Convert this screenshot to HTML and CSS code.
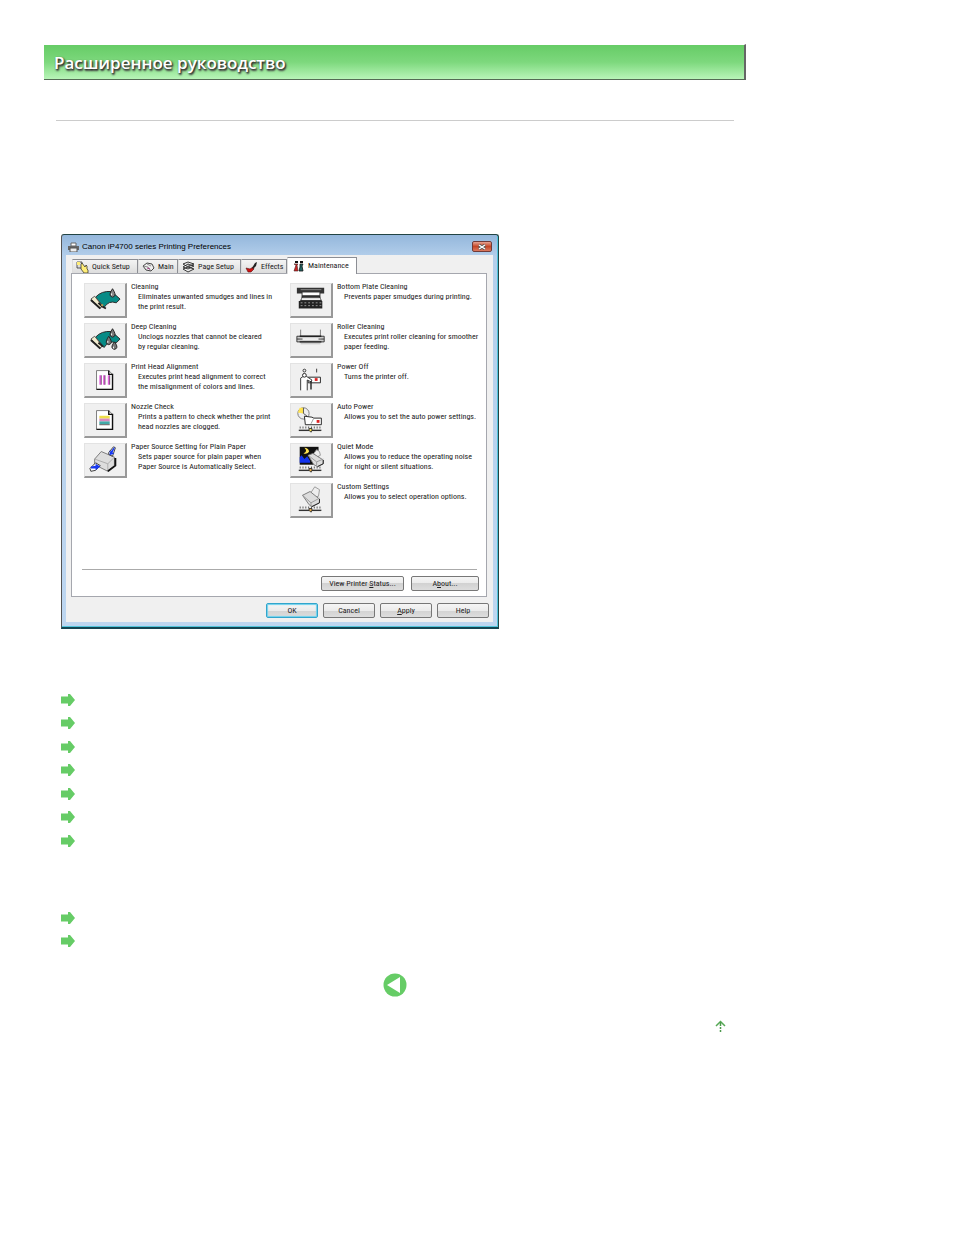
FILE: index.html
```
<!DOCTYPE html>
<html lang="ru">
<head>
    <meta charset="UTF-8">
    <meta name="viewport" content="width=device-width, initial-scale=1.0">
    <title>Расширенное руководство</title>
    <link rel="stylesheet" href="styles.css">
</head>
<body>
    <div class="page">
        <header class="header">
            <h1>Расширенное руководство</h1>
        </header>

        <main class="content">
            <section class="window">
                <div class="titlebar">
                    <svg class="printer" viewBox="0 0 11 10"><path d="M3 1h5v3H3z" fill="#fff" stroke="#666"/><path d="M0 4h11v4H0z" fill="#666"/><path d="M2 6h7v4H2z" fill="#eee" stroke="#555"/></svg>
                    <h2>Canon iP4700 series Printing Preferences</h2>
                    <button class="close" aria-label="Close"><svg viewBox="0 0 8 6"><path d="M1 1l6 4M7 1L1 5" stroke="#555" stroke-width="3"/><path d="M1 1l6 4M7 1L1 5" stroke="#fff" stroke-width="1.5"/></svg></button>
                </div>

                <div class="client">
                    <div class="tabs">
                        <button class="tab quick"><svg viewBox="0 0 13 12"><path d="M1 1h5v6H1z" fill="#ddd" stroke="#333" stroke-width=".8"/><path d="M1 1h3v3H1z" fill="#ffed77"/><path d="M5 3l1-1 3 4 1-2 1 1v3l1 1v3H8L5 8z" fill="#ffed77" stroke="#222" stroke-width=".7"/></svg>Quick Setup</button>
                        <button class="tab main"><svg viewBox="0 0 13 12"><path d="M1 5l4-3 5 1 2 4-3 3-5-1z" fill="#eee" stroke="#333" stroke-width=".9"/><path d="M1 5l5 1 3 4M5 3l4 2" fill="none" stroke="#777" stroke-width=".8"/><path d="M5 7l3 1" stroke="#927" stroke-width=".8"/></svg>Main</button>
                        <button class="tab setup"><svg viewBox="0 0 13 12"><path d="M1 8l5-2 6 2-6 3zM1 6l5-3 6 2-6 3zM1 3l5-2 6 2-6 3z" fill="#eee" stroke="#222" stroke-width=".9"/><path d="M5 4l3-1v2z" fill="#555"/></svg>Page Setup</button>
                        <button class="tab effects"><svg viewBox="0 0 13 12"><path d="M1 7l4 1 3-2 1 2-3 3H3z" fill="#d21212" stroke="#511" stroke-width=".6"/><path d="M7 7l3-5 2-1-1 4-3 3z" fill="#222"/></svg>Effects</button>
                        <button class="tab active"><svg viewBox="0 0 13 12"><path d="M2 4l2 1-2 6h4L5 5l1-1z" fill="#c22" stroke="#422" stroke-width=".6"/><path d="M8 4h3l-1 2 1 5H7l1-4z" fill="#266" stroke="#111" stroke-width=".8"/><path d="M3 2h3M8 2h3" stroke="#111" stroke-width="2"/></svg>Maintenance</button>
                    </div>

                    <div class="panel">
                        <div class="columns">
                            <div class="column">
                                <div class="item">
                                    <button class="tool" aria-labelledby="cleaning"><svg viewBox="0 0 42 34"><path d="M11 14q6-7 17-6l9 8-4 4q-8-3-13 5z" fill="#078b86" stroke="#222"/><path d="M6 16l4-3 8 10-2 3z" fill="#f2edcf" stroke="#555"/><path d="M6 17l10 9M14 20l4 4 4 2" stroke="#222" stroke-width="2" fill="none"/><path d="M17 22l2 1" stroke="#b99a55" stroke-width="2"/><path d="M29 5q-4 6-2 8 2 2 4 0 2-2-2-8z" fill="#888" stroke="#222"/><path d="M28 10v2" stroke="#fff"/></svg></button>
                                    <div class="text"><h3 id="cleaning">Cleaning</h3><p>Eliminates unwanted smudges and lines in<br>the print result.</p></div>
                                </div>
                                <div class="item">
                                    <button class="tool" aria-labelledby="deep"><svg viewBox="0 0 42 34"><path d="M11 14q6-7 17-6l9 8-4 4q-8-3-13 5z" fill="#078b86" stroke="#222"/><path d="M6 16l4-3 8 10-2 3z" fill="#f2edcf" stroke="#555"/><path d="M6 17l10 9M14 20l5 4" stroke="#222" stroke-width="2"/><path d="M29 5q-4 6-2 8 2 2 4 0 2-2-2-8zM25 13q-4 6-2 8 2 2 4 0 2-2-2-8zM31 19q-4 5-2 7 2 2 4 0 2-2-2-7z" fill="#777" stroke="#222"/><path d="M28 10v2M24 18v2M30 24v2" stroke="#fff"/></svg></button>
                                    <div class="text"><h3 id="deep">Deep Cleaning</h3><p>Unclogs nozzles that cannot be cleared<br>by regular cleaning.</p></div>
                                </div>
                                <div class="item">
                                    <button class="tool" aria-labelledby="alignment"><svg viewBox="0 0 42 34"><path d="M12 7h13l4 4v16H12z" fill="#fff" stroke="#777"/><path d="M25 7v4h4v16H12" fill="none" stroke="#111" stroke-width="1.5"/><path d="M16 12v10M20 12v10M25 12v10" stroke="#e465df" stroke-width="2"/><path d="M17 12v10M21 12v10M26 12v10" stroke="#523452" stroke-width=".8"/></svg></button>
                                    <div class="text"><h3 id="alignment">Print Head Alignment</h3><p>Executes print head alignment to correct<br>the misalignment of colors and lines.</p></div>
                                </div>
                                <div class="item">
                                    <button class="tool" aria-labelledby="nozzle"><svg viewBox="0 0 42 34"><path d="M12 7h13l4 4v16H12z" fill="#fff" stroke="#777"/><path d="M25 7v4h4v16H12" fill="none" stroke="#111" stroke-width="1.5"/><path d="M15 14h11" stroke="#eedf4b" stroke-width="3"/><path d="M15 17h11" stroke="#d98abf" stroke-width="3"/><path d="M15 20h11" stroke="#42aaa9" stroke-width="3"/><path d="M15 22h11" stroke="#555"/></svg></button>
                                    <div class="text"><h3 id="nozzle">Nozzle Check</h3><p>Prints a pattern to check whether the print<br>head nozzles are clogged.</p></div>
                                </div>
                                <div class="item">
                                    <button class="tool" aria-labelledby="source"><svg viewBox="0 0 42 34"><path d="M10 16l7-8 14 6v9l-7 6-14-7z" fill="#ddd" stroke="#777"/><path d="M10 16l14 5 7-7M24 21v8" fill="none" stroke="#aaa"/><path d="M24 29l8-6v-8" fill="none" stroke="#111" stroke-width="2"/><path d="M25 9l5-6 2 1-3 9-4-2z" fill="#fff" stroke="#333"/><path d="M31 3l-4 5-1-1v5l5-2-2-1 2-4z" fill="#1738f0"/><path d="M5 26l6-6 5 3-5 5-5 1z" fill="#fff" stroke="#333"/><path d="M6 24l5-1v-2l5 3-5 4v-2H6z" fill="#1738f0"/></svg></button>
                                    <div class="text"><h3 id="source">Paper Source Setting for Plain Paper</h3><p>Sets paper source for plain paper when<br>Paper Source is Automatically Select.</p></div>
                                </div>
                            </div>

                            <div class="column">
                                <div class="item">
                                    <button class="tool" aria-labelledby="plate"><svg viewBox="0 0 42 34"><path d="M6 4h29v6h-4v4H11v-4H6z" fill="#333"/><path d="M12 9h18v3H12z" fill="#fff"/><path d="M10 6h22" stroke="#888"/><path d="M12 13h18l2 5H10z" fill="#555" stroke="#222"/><path d="M11 16h20" stroke="#eee" stroke-width="2"/><path d="M8 18h25v8H8z" fill="#222"/><path d="M10 20h22M10 23h22" stroke="#999" stroke-dasharray="2 2"/></svg></button>
                                    <div class="text"><h3 id="plate">Bottom Plate Cleaning</h3><p>Prevents paper smudges during printing.</p></div>
                                </div>
                                <div class="item">
                                    <button class="tool" aria-labelledby="roller"><svg viewBox="0 0 42 34"><path d="M10 6v8M31 6v8" stroke="#777"/><path d="M6 13h29v6H6z" fill="#ccc" stroke="#333"/><path d="M9 13h23M9 19h23" stroke="#222" stroke-width="1.5"/><path d="M9 16h23" stroke="#eee" stroke-width="2"/><path d="M6 16h6M29 16h6" stroke="#333"/><path d="M10 21h21" stroke="#bbb"/></svg></button>
                                    <div class="text"><h3 id="roller">Roller Cleaning</h3><p>Executes print roller cleaning for smoother<br>paper feeding.</p></div>
                                </div>
                                <div class="item">
                                    <button class="tool" aria-labelledby="power"><svg viewBox="0 0 42 34"><circle cx="14" cy="7" r="1.5" fill="none" stroke="#333"/><path d="M27 5v4" stroke="#333"/><path d="M18 14h13v6H18z" fill="#fff" stroke="#222"/><path d="M25 15h3v3h-3z" fill="#d22"/><path d="M10 28V15l3-2h3l6 4-1 2-4-2v11" fill="#fff" stroke="#333"/><path d="M21 18v9" stroke="#222" stroke-width="1.5"/><circle cx="14" cy="12" r="2" fill="#fff" stroke="#222"/></svg></button>
                                    <div class="text"><h3 id="power">Power Off</h3><p>Turns the printer off.</p></div>
                                </div>
                                <div class="item">
                                    <button class="tool" aria-labelledby="auto"><svg viewBox="0 0 42 34"><circle cx="13" cy="10" r="6" fill="#eee" stroke="#777"/><path d="M13 10V4H9L7 9z" fill="#ffe34f"/><path d="M13 4v6l4 3" fill="none" stroke="#555"/><path d="M14 13l8 1 2 1h8v7H15z" fill="#fff" stroke="#222"/><path d="M24 15l-3 6" fill="none" stroke="#999"/><path d="M27 17h3v3h-3z" fill="#d22"/><path d="M9 25h23" stroke="#555" stroke-dasharray="1 2" stroke-width="2"/><path d="M8 28h24" stroke="#333" stroke-width="1.5"/><path d="M19 26h3v2l-1 2-2-2z" fill="#ffe34f" stroke="#333"/></svg></button>
                                    <div class="text"><h3 id="auto">Auto Power</h3><p>Allows you to set the auto power settings.</p></div>
                                </div>
                                <div class="item">
                                    <button class="tool" aria-labelledby="quiet"><svg viewBox="0 0 42 34"><path d="M9 3h20v19H9z" fill="#111"/><path d="M14 4q4 4-1 6 5 1 6-2-1-4-5-4z" fill="#ffe34f"/><path d="M9 14l2-2 3 4 3-3 3 5v2H9z" fill="#1233ed"/><path d="M24 10l3-4 3 2 1 4-4 2z" fill="#eee" stroke="#999"/><path d="M18 12l5-2 11 7v4l-6 3-4-2z" fill="#ddd" stroke="#777"/><path d="M18 12l9 7 7-3M27 19v4" fill="none" stroke="#999"/><path d="M28 24l6-3v-4" fill="none" stroke="#222"/><path d="M9 25h23" stroke="#555" stroke-dasharray="1 2" stroke-width="2"/><path d="M8 28h24" stroke="#333" stroke-width="1.5"/><path d="M19 26h3v2l-1 2-2-2z" fill="#e9ac46" stroke="#333"/></svg></button>
                                    <div class="text"><h3 id="quiet">Quiet Mode</h3><p>Allows you to reduce the operating noise<br>for night or silent situations.</p></div>
                                </div>
                                <div class="item">
                                    <button class="tool" aria-labelledby="custom"><svg viewBox="0 0 42 34"><path d="M21 9l4-6 5 3-1 7-5 1z" fill="#eee" stroke="#999"/><path d="M12 12l8-4 10 8v4l-8 4-3-2z" fill="#ddd" stroke="#777"/><path d="M12 12l9 8 9-5M21 20v4" fill="none" stroke="#999"/><path d="M22 24l8-4v-4" fill="none" stroke="#222"/><path d="M9 25h23" stroke="#555" stroke-dasharray="1 2" stroke-width="2"/><path d="M8 28h24" stroke="#333" stroke-width="1.5"/><path d="M19 26h3v2l-1 2-2-2z" fill="#e9ac46" stroke="#333"/></svg></button>
                                    <div class="text"><h3 id="custom">Custom Settings</h3><p>Allows you to select operation options.</p></div>
                                </div>
                            </div>
                        </div>

                        <div class="panel-buttons">
                            <button class="btn status">View Printer <u>S</u>tatus...</button>
                            <button class="btn about">A<u>b</u>out...</button>
                        </div>
                    </div>

                    <div class="dialog-buttons">
                        <button class="btn ok">OK</button>
                        <button class="btn">Cancel</button>
                        <button class="btn"><u>A</u>pply</button>
                        <button class="btn">Help</button>
                    </div>
                </div>
            </section>

            <svg class="defs" width="0" height="0">
                <symbol id="arrow" viewBox="0 0 14 12"><path d="M0 2.500h7V0h2l5 6-5 6H7V9.500H0z" fill="#66cc66"/></symbol>
            </svg>

            <ul class="links">
                <li><a href="#" aria-label="Cleaning"><svg><use href="#arrow"/></svg></a></li>
                <li><a href="#" aria-label="Deep Cleaning"><svg><use href="#arrow"/></svg></a></li>
                <li><a href="#" aria-label="Print Head Alignment"><svg><use href="#arrow"/></svg></a></li>
                <li><a href="#" aria-label="Nozzle Check"><svg><use href="#arrow"/></svg></a></li>
                <li><a href="#" aria-label="Paper Source Setting"><svg><use href="#arrow"/></svg></a></li>
                <li><a href="#" aria-label="Bottom Plate Cleaning"><svg><use href="#arrow"/></svg></a></li>
                <li><a href="#" aria-label="Roller Cleaning"><svg><use href="#arrow"/></svg></a></li>
            </ul>
            <ul class="links related">
                <li><a href="#" aria-label="Power Off"><svg><use href="#arrow"/></svg></a></li>
                <li><a href="#" aria-label="Quiet Mode"><svg><use href="#arrow"/></svg></a></li>
            </ul>

            <a class="back" href="#" aria-label="Back"><svg viewBox="0 0 24 24"><circle cx="12" cy="12" r="11.5" fill="#66cc66"/><path d="M4 12l13-8v16z" fill="#fff"/></svg></a>
            <a class="top" href="#" aria-label="Top"><svg viewBox="0 0 11 12"><path d="M1 6l4.500-4.500L10 6" fill="none" stroke="#55a955" stroke-width="1.500"/><path d="M5.500 2v10" stroke="#4c994c" stroke-width="1.500" stroke-dasharray="4 1 2 1"/></svg></a>
        </main>
    </div>
</body>
</html>
```
FILE: styles.css
```
* {
    box-sizing: border-box;
}
body {
    margin: 0;
    background-color: #fff;
    font-family: "Liberation Sans", Arial, sans-serif;
}
h1, h2, h3, p, ul {
    margin: 0;
    padding: 0;
    font-weight: normal;
}
button {
    margin: 0;
    padding: 0;
    font: inherit;
    color: #222;
}
svg {
    display: block;
    flex-shrink: 0;
}
.page {
    max-width: 702px;
    margin: 44px 44px 0;
}
.header {
    padding: 5px 10px 4px;
    border-top: 1px solid #fff;
    border-right: 2px solid #666;
    border-bottom: 1px solid #556b55;
    background: linear-gradient(#66cc66, #7dd87d 50%, #b8f5b8);
}
h1 {
    color: #fff;
    font: 600 17px/25px "Open Sans", sans-serif;
    text-shadow: 1px 1px 2px #222, 1px 2px 2px #555;
}
.content {
    margin: 40px 12px 0;
    padding: 113px 5px 0;
    border-top: 1px solid #ccc;
}

/* printer window */
.window {
    max-width: 438px;
    padding: 0 5px 5px 4px;
    border: 1px solid #244;
    border-left-color: #555;
    border-bottom: 2px solid #134653;
    border-radius: 3px 3px 0 0;
    background: linear-gradient(#94b7dc, #b4cfeb 22px, #bdd6f0);
    box-shadow: inset -1px -1px 0 #51c4dc;
}
.titlebar {
    display: flex;
    align-items: center;
    height: 20px;
    padding: 3px 1px 0 2px;
}
.printer {
    width: 11px;
    height: 10px;
}
h2 {
    flex: 1;
    margin-left: 3px;
    font-size: 8px;
    line-height: 12px;
}
.close {
    display: flex;
    align-items: center;
    justify-content: center;
    width: 20px;
    height: 11px;
    border: 1px solid #713b38;
    border-radius: 2px;
    background: linear-gradient(#e6a392, #c54727 50%, #db7960);
}
.close svg {
    width: 8px;
    height: 6px;
}
.client {
    padding: 2px 6px 4px 5px;
    background-color: #f0f0f0;
    font-family: "Roboto Condensed", "Liberation Sans", sans-serif;
    font-size: 8px;
    line-height: 10px;
    color: #222;
}
.tabs {
    display: flex;
    align-items: flex-end;
    padding-left: 1px;
}
.tab {
    display: flex;
    align-items: center;
    gap: 3px;
    height: 14px;
    padding-left: 3px;
    border: 1px solid #8c8e94;
    border-left-color: #ddd;
    border-bottom: none;
    background: linear-gradient(#f4f4f4, #ddd);
    white-space: nowrap;
}
.tab svg {
    width: 13px;
    height: 12px;
}
.quick {
    width: 66px;
}
.main {
    width: 40px;
}
.setup {
    width: 63px;
}
.effects {
    width: 46px;
}
.active {
    width: 70px;
    height: 17px;
    margin-bottom: -1px;
    padding-left: 4px;
    background: #fff;
}
.panel {
    padding: 9px 9px 5px 10px;
    border: 1px solid #a5a7ae;
    background-color: #fff;
}
.columns {
    display: grid;
    grid-template-columns: 206px 1fr;
    padding: 0 0 51px 2px;
    border-bottom: 1px solid #aaa;
}
.column {
    display: flex;
    flex-direction: column;
    gap: 5px;
}
.item {
    display: flex;
    gap: 4px;
}
.tool {
    flex-shrink: 0;
    width: 43px;
    height: 35px;
    border: 1px solid #e3e3e3;
    border-right: 2px solid #999;
    border-bottom: 2px solid #999;
    background-color: #f0f0f0;
}
.tool svg {
    width: 40px;
    height: 32px;
}
.text {
    margin-top: -1px;
    white-space: nowrap;
}
h3 {
    font-size: 8px;
}
.text p {
    padding-left: 7px;
}
.panel-buttons, .dialog-buttons {
    display: flex;
    justify-content: flex-end;
    gap: 7px;
    margin: 6px -2px 0 0;
}
.dialog-buttons {
    gap: 5px;
}
.btn {
    width: 52px;
    height: 15px;
    border: 1px solid #777;
    border-radius: 2px;
    background: linear-gradient(#f5f5f5, #ebebeb 50%, #d2d2d2 50%, #ddd);
    line-height: 10px;
}
.status {
    width: 83px;
}
.about {
    width: 68px;
}
.ok {
    border-color: #32a5cc;
    box-shadow: inset 0 0 1px 1px #6dd1ed;
}

/* links under the window */
.links {
    margin-top: 59px;
    list-style: none;
}
.links li {
    height: 23px;
    padding-top: 6px;
}
.links li:nth-child(even) {
    height: 24px;
}
.links a {
    display: block;
    width: 14px;
}
.links svg {
    width: 14px;
    height: 12px;
}
.related {
    margin-top: 54px;
}
.back {
    display: block;
    width: 24px;
    margin: 20px auto 0;
}
.top {
    display: block;
    width: 11px;
    margin: 23px 3px 0 auto;
}
```
